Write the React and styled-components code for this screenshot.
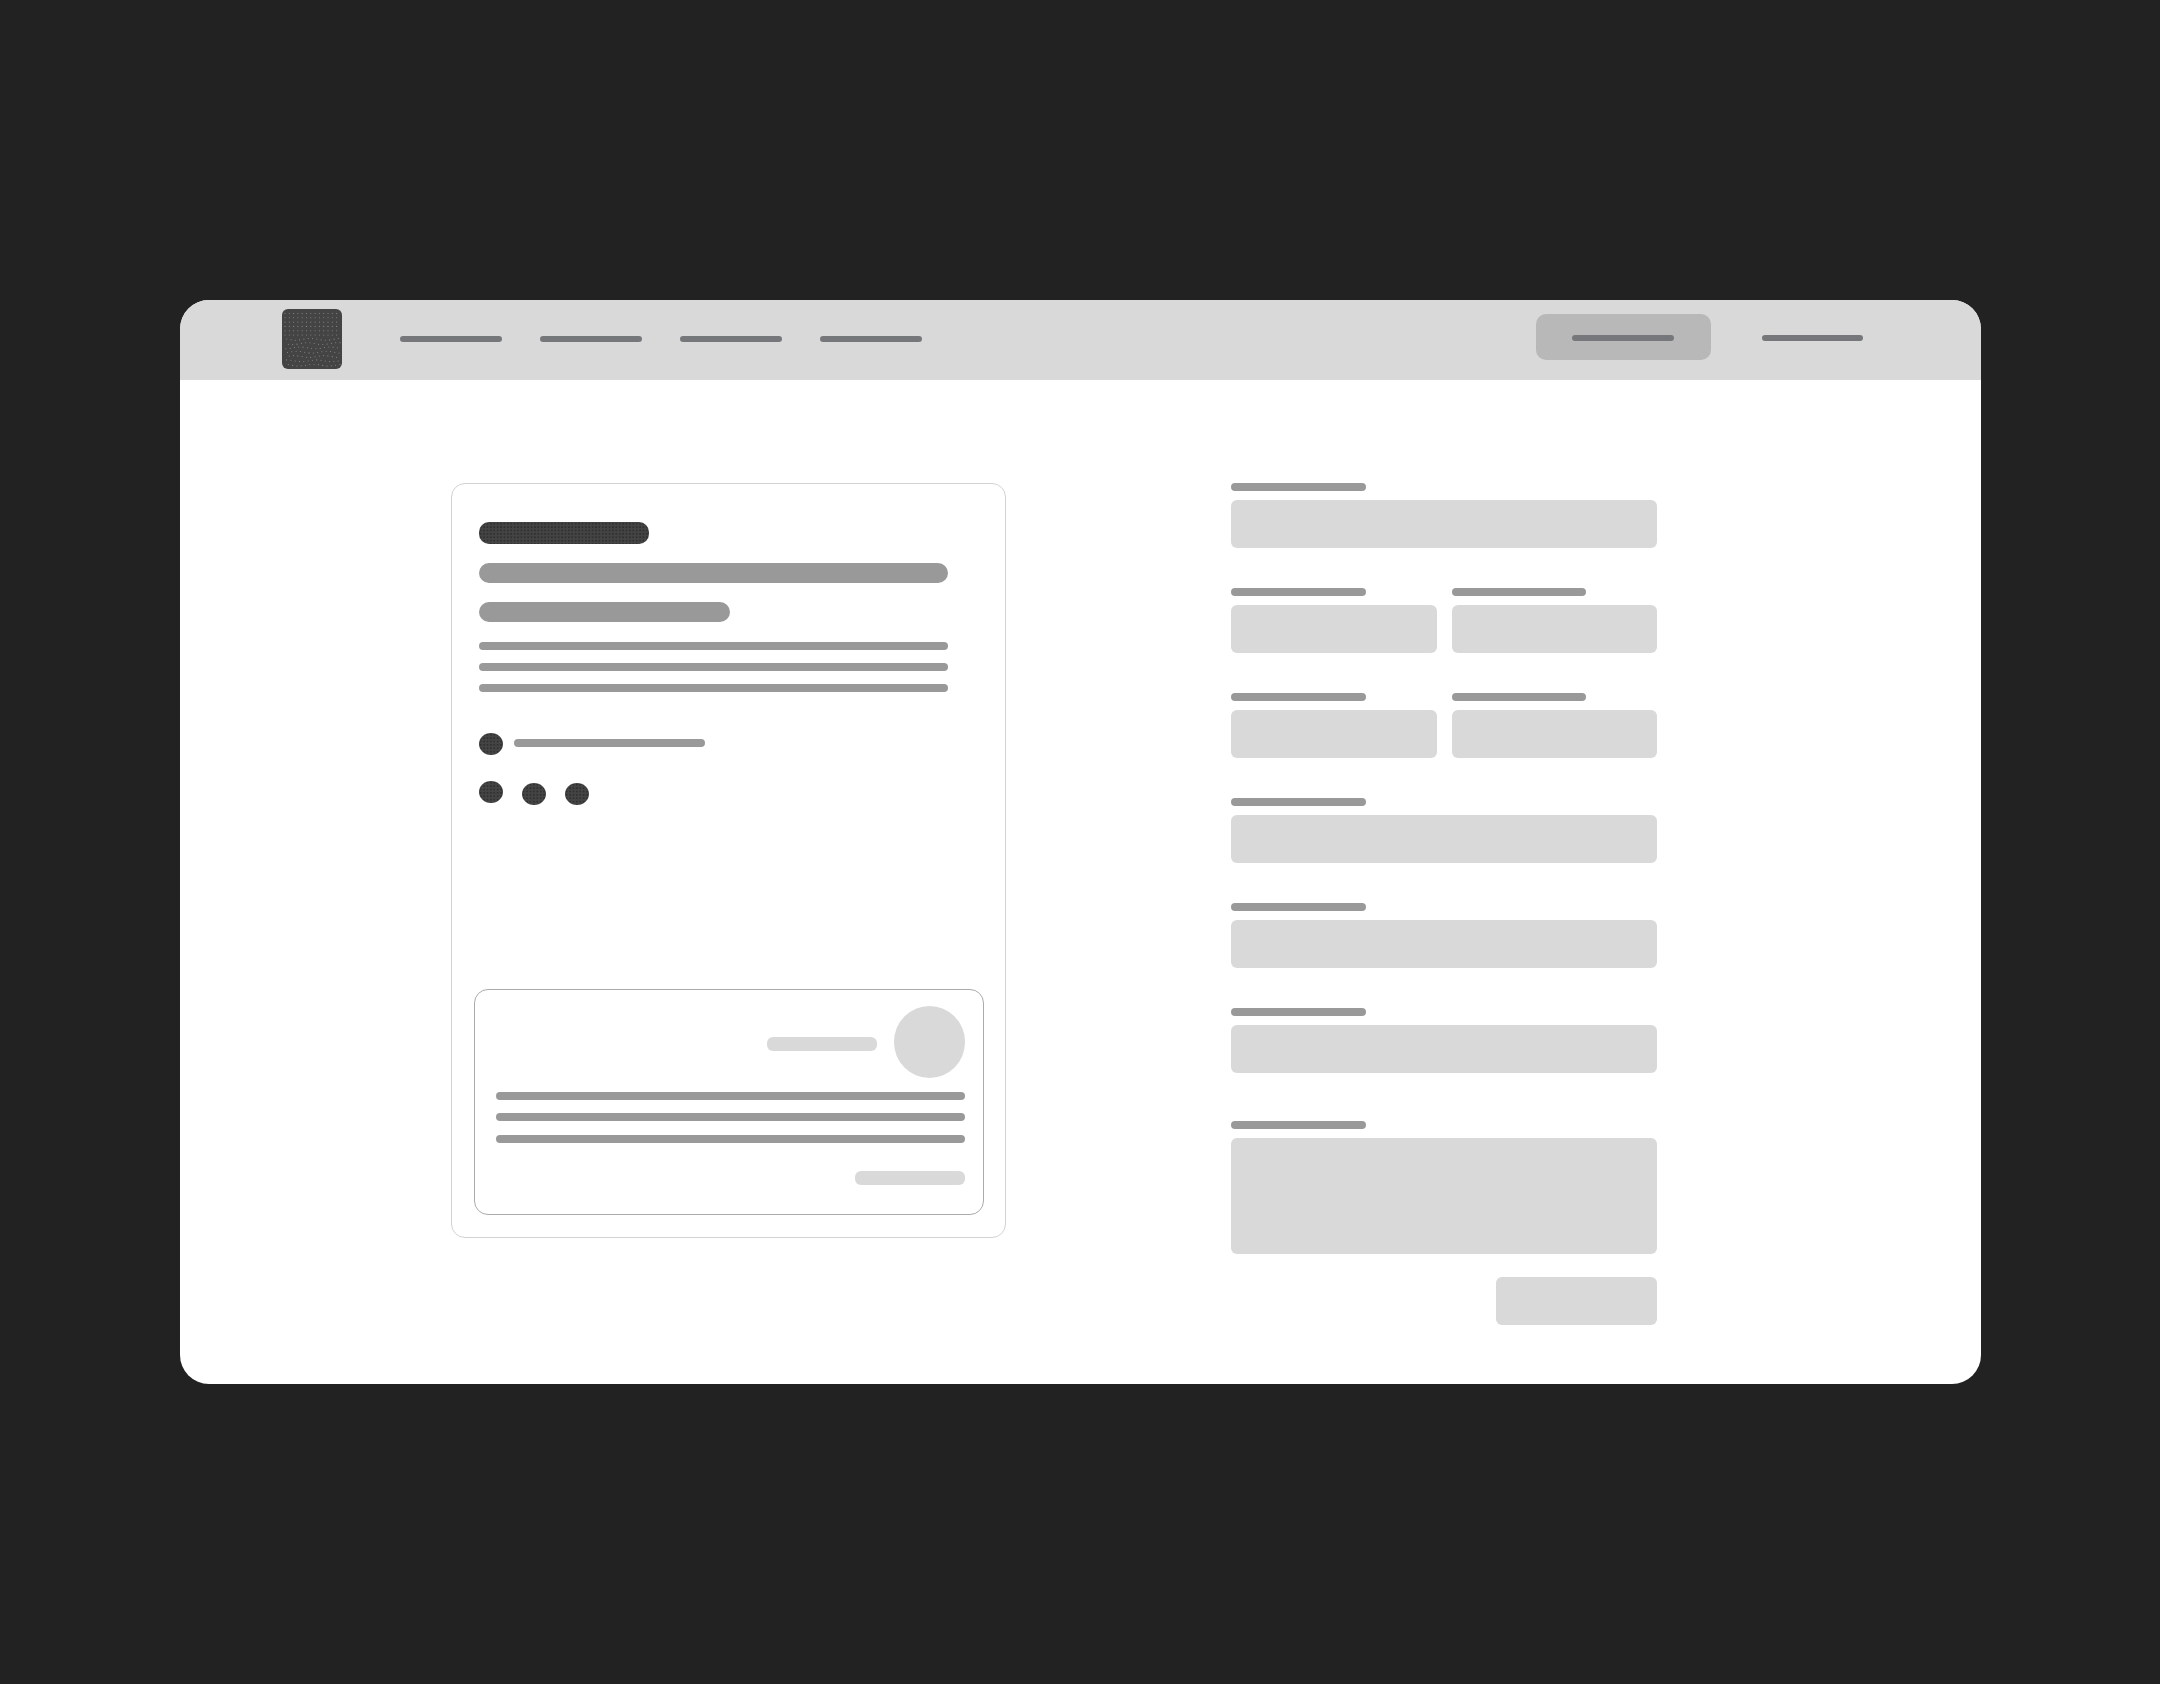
import React from "react";
import styled, { createGlobalStyle } from "styled-components";

const GlobalStyle = createGlobalStyle`
  html, body {
    margin: 0;
    padding: 0;
    background: #222222;
    font-family: "Liberation Sans", Arial, sans-serif;
  }
  * {
    box-sizing: border-box;
  }
`;

const Page = styled.div`
  min-height: 1684px;
  padding: 300px 0 0 180px;
  background: #222222;
`;

const Frame = styled.div`
  width: 1801px;
  height: 1084px;
  background: #ffffff;
  border-radius: 29px;
  overflow: hidden;
`;

const Header = styled.header`
  display: flex;
  align-items: center;
  height: 80px;
  padding: 0 118px 2px 102px;
  background: #d9d9d9;
`;

const LogoBox = styled.svg`
  flex: none;
  display: block;
  width: 60px;
  height: 60px;
`;

const Nav = styled.nav`
  display: flex;
  gap: 38.5px;
  margin-left: 58px;
`;

const NavLine = styled.div`
  width: 101.5px;
  height: 6px;
  border-radius: 3px;
  background: #75777b;
`;

const Actions = styled.div`
  display: flex;
  align-items: center;
  gap: 51px;
  margin-left: auto;
  margin-bottom: 5px;
`;

const Cta = styled.div`
  display: flex;
  align-items: center;
  justify-content: center;
  width: 175px;
  height: 46px;
  padding-top: 2px;
  border-radius: 10px;
  background: #b8b8b8;
`;

const ActionLink = styled(NavLine)`
  margin-top: 3px;
`;

const Main = styled.main`
  display: flex;
  gap: 225.3px;
  padding: 103px 0 0 271px;
`;

const Card = styled.section`
  display: flex;
  flex-direction: column;
  width: 555px;
  height: 754.5px;
  padding: 37.5px 22px 21.5px;
  border: 1px solid #d2d2d2;
  border-radius: 14px;
`;

const Bar = styled.div`
  flex: none;
  width: ${(p) => p.$w}px;
  height: ${(p) => p.$h}px;
  margin-top: ${(p) => p.$top || 0}px;
  margin-left: ${(p) => p.$left || 0}px;
  border-radius: ${(p) => p.$r || 4}px;
  background: ${(p) => p.$color || "#999999"};
`;

const Speckle = styled.div`
  background-color: #444444;
  background-image: radial-gradient(#303030 0.6px, transparent 0.8px);
  background-size: 3.4px 3.4px;
`;

const Title = styled(Speckle)`
  width: 170px;
  height: 22px;
  margin-left: 4.5px;
  border-radius: 10px;
`;

const Dot = styled(Speckle)`
  flex: none;
  width: 24px;
  height: 22px;
  margin-top: ${(p) => p.$drop || 0}px;
  border-radius: 50%;
`;

const MetaRow = styled.div`
  display: flex;
  align-items: flex-start;
  gap: 11px;
  margin: 41px 0 0 4.5px;
`;

const DotRow = styled.div`
  display: flex;
  align-items: flex-start;
  gap: 19px;
  margin: 25.5px 0 0 4.5px;
`;

const Quote = styled.div`
  display: flex;
  flex-direction: column;
  align-items: flex-end;
  width: 510px;
  height: 226.5px;
  margin-top: auto;
  padding: 16.5px 18px 0 21px;
  border: 1px solid #ababab;
  border-radius: 14px;
`;

const QuoteHead = styled.div`
  display: flex;
  align-items: center;
  gap: 16.5px;
`;

const Avatar = styled.div`
  width: 71.5px;
  height: 71.5px;
  border-radius: 50%;
  background: #d9d9d9;
`;

const Form = styled.form`
  display: flex;
  flex-direction: column;
  width: 425.5px;
`;

const Field = styled.div`
  display: flex;
  flex: 1;
  flex-direction: column;
  gap: 9.3px;
  margin-top: ${(p) => p.$top || 0}px;
  min-width: 0;
`;

const FieldRow = styled.div`
  display: grid;
  grid-template-columns: 1fr 1fr;
  gap: 15px;
  margin-top: 39.7px;
`;

const Label = styled.div`
  width: 134.3px;
  height: 8px;
  border-radius: 4px;
  background: #999999;
`;

const Input = styled.div`
  height: ${(p) => p.$h || 48}px;
  border-radius: 6px;
  background: #d9d9d9;
`;

const Submit = styled.div`
  align-self: flex-end;
  width: 161px;
  height: 48px;
  margin-top: 22.7px;
  border-radius: 6px;
  background: #d9d9d9;
`;

// halftone dots of the logo: straight rows on top, drifting towards the bottom
const logoDots = [];
for (let row = 0; row < 13; row++) {
  const drift = row > 5 ? ((row - 5) * 1.7) % 4.3 : 0;
  for (let col = 0; col < 14; col++) {
    const x = 3 + col * 4.3 + drift;
    const y = 4.5 + row * 4.3 + (row > 5 ? Math.sin(col * 0.9 + row) * 0.9 : 0);
    if (x < 58) logoDots.push([x, y]);
  }
}

const Logo = () => (
  <LogoBox viewBox="0 0 60 60">
    <rect width="60" height="60" rx="6" fill="#444444" />
    {logoDots.map(([x, y]) => (
      <circle key={`${x}-${y}`} cx={x} cy={y} r="0.55" fill="#8a8a8a" />
    ))}
  </LogoBox>
);

const TextField = ({ top, height }) => (
  <Field $top={top}>
    <Label />
    <Input $h={height} />
  </Field>
);

const App = () => (
  <Page>
    <GlobalStyle />
    <Frame>
      <Header>
        <Logo />
        <Nav>
          <NavLine />
          <NavLine />
          <NavLine />
          <NavLine />
        </Nav>
        <Actions>
          <Cta>
            <NavLine />
          </Cta>
          <ActionLink />
        </Actions>
      </Header>
      <Main>
        <Card>
          <Title />
          <Bar $w={469} $h={20} $top={19.7} $left={4.5} $r={10} />
          <Bar $w={251} $h={20} $top={18.7} $left={4.5} $r={10} />
          <Bar $w={469} $h={8} $top={20} $left={4.5} />
          <Bar $w={469} $h={8} $top={13} $left={4.5} />
          <Bar $w={469} $h={8} $top={13.3} $left={4.5} />
          <MetaRow>
            <Dot />
            <Bar $w={191.5} $h={8} $top={6} />
          </MetaRow>
          <DotRow>
            <Dot />
            <Dot $drop={2.7} />
            <Dot $drop={2.7} />
          </DotRow>
          <Quote>
            <QuoteHead>
              <Bar $w={110} $h={14} $top={5} $r={6} $color="#d9d9d9" />
              <Avatar />
            </QuoteHead>
            <Bar $w={469} $h={8} $top={14.5} />
            <Bar $w={469} $h={8} $top={13.3} />
            <Bar $w={469} $h={8} $top={13.3} />
            <Bar $w={110} $h={14} $top={28.7} $r={6} $color="#d9d9d9" />
          </Quote>
        </Card>
        <Form>
          <TextField />
          <FieldRow>
            <TextField />
            <TextField />
          </FieldRow>
          <FieldRow>
            <TextField />
            <TextField />
          </FieldRow>
          <TextField top={39.7} />
          <TextField top={39.7} />
          <TextField top={39.7} />
          <TextField top={47.3} height={116} />
          <Submit />
        </Form>
      </Main>
    </Frame>
  </Page>
);

export default App;
